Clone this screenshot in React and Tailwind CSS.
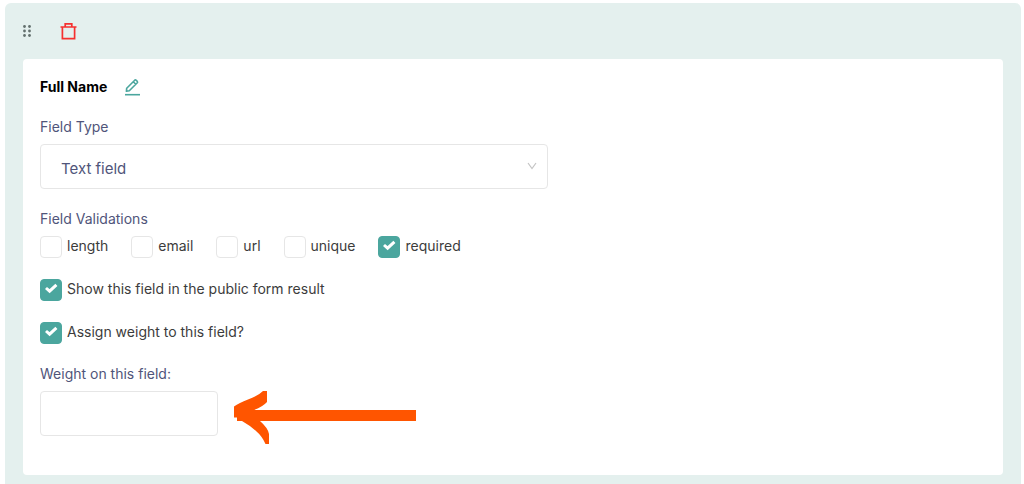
import { useState } from "react";

const box =
  "h-[22px] w-[22px] appearance-none rounded border border-[#e6e6e6] bg-white checked:border-[#4ba69e] checked:bg-[#4ba69e]";

function Check({ id, label, initial = false }) {
  const [on, setOn] = useState(initial);
  return (
    <div className="flex items-start gap-[5px]">
      <span className="relative flex">
        <input
          id={id}
          type="checkbox"
          checked={on}
          onChange={(e) => setOn(e.target.checked)}
          className={box}
        />
        {on && (
          <svg
            viewBox="0 0 22 22"
            aria-hidden="true"
            className="pointer-events-none absolute inset-0 h-full w-full"
          >
            <path d="M6 9 L9.6 12.2 L16.4 5.8" fill="none" stroke="white" strokeWidth="3" />
          </svg>
        )}
      </span>
      <label htmlFor={id} className="text-sm leading-5 text-[#3c3c3c]">
        {label}
      </label>
    </div>
  );
}

export default function App() {
  return (
    <main className="bg-white pt-[3px] pr-[3px] pl-[5px] font-['Inter',sans-serif]">
      <section className="rounded-t-md bg-[#e4f0ee] px-[18px] pb-[9px]">
        <div className="flex h-14 items-center gap-7">
          <button type="button" aria-label="Move field" className="flex">
            <svg viewBox="0 0 9 14" className="h-[14px] w-[9px]" fill="#63706e">
              <circle cx="1.5" cy="2.5" r="1.4" />
              <circle cx="6.5" cy="2.5" r="1.4" />
              <circle cx="1.5" cy="7" r="1.4" />
              <circle cx="6.5" cy="7" r="1.4" />
              <circle cx="1.5" cy="11.5" r="1.4" />
              <circle cx="6.5" cy="11.5" r="1.4" />
            </svg>
          </button>
          <button type="button" aria-label="Delete field" className="flex">
            <svg
              viewBox="0 0 17 17"
              className="h-[17px] w-[17px]"
              fill="none"
              stroke="#f5302f"
              strokeWidth="1.7"
            >
              <path d="M0.5 4H16.5M5.2 4V0.9H11.8V4M2.4 4V15.7H14.6V4" />
            </svg>
          </button>
        </div>

        <form className="rounded bg-white px-[17px] pt-[18px] pb-[30px]">
          <div className="flex h-5 items-center gap-[18px]">
            <h2 className="text-sm leading-5 font-bold text-black">Full Name</h2>
            <button type="button" aria-label="Edit name" className="flex">
              <svg
                viewBox="0 0 15 18"
                className="h-[18px] w-[15px]"
                fill="none"
                stroke="#4ba69e"
                strokeWidth="1.6"
                strokeLinejoin="round"
              >
                <path d="M1.4 13.3L1.7 10.2L9.7 2.2Q10.4 1.6 11.1 2.2L12.3 3.4Q12.9 4.1 12.3 4.8L4.3 12.8ZM8.3 3.8L10.8 6.3" />
                <path d="M0 16.7H15" />
              </svg>
            </button>
          </div>

          <label htmlFor="type" className="mt-5 block text-sm leading-5 text-[#50557a]">
            Field Type
          </label>
          <div className="relative mt-[7px] w-[508px] max-w-full">
            <select
              id="type"
              className="h-[45px] w-full appearance-none rounded border border-[#e6e6e6] bg-white pt-[6px] pl-5 text-[15px] text-[#50557a]"
            >
              <option>Text field</option>
            </select>
            <svg
              viewBox="0 0 10 8"
              aria-hidden="true"
              className="pointer-events-none absolute top-[18px] right-[11px] h-2 w-[10px]"
              fill="none"
              stroke="#c4c4c4"
              strokeWidth="1.2"
            >
              <path d="M1 1L5 6.5L9 1" />
            </svg>
          </div>

          <fieldset className="mt-5">
            <legend className="text-sm leading-5 text-[#50557a]">Field Validations</legend>
            <div className="mt-[7px] flex flex-wrap gap-[23px]">
              <Check id="length" label="length" />
              <Check id="email" label="email" />
              <Check id="url" label="url" />
              <Check id="unique" label="unique" />
              <Check id="required" label="required" initial />
            </div>
          </fieldset>

          <div className="mt-[21px] flex flex-col gap-[21px]">
            <Check id="public" label="Show this field in the public form result" initial />
            <Check id="assign" label="Assign weight to this field?" initial />
          </div>

          <label htmlFor="weight" className="mt-5 block text-sm leading-5 text-[#50557a]">
            Weight on this field:
          </label>
          <div className="mt-[7px] flex items-start gap-4">
            <input
              id="weight"
              type="text"
              className="h-[45px] w-[178px] rounded border border-[#e6e6e6] px-3 text-sm"
            />
            <svg viewBox="0 0 182 54" aria-hidden="true" className="h-[54px] w-[182px]" fill="#ff5500">
              <path d="M0 15.5Q5 12 14 8.5Q24 5 29 0H33V11Q29 15.5 20 19H182V30H26Q34 37 35 43V53H31.5Q28 45 22 40Q16 34.5 8 30H3V26.5H0Z" />
            </svg>
          </div>
        </form>
      </section>
    </main>
  );
}
